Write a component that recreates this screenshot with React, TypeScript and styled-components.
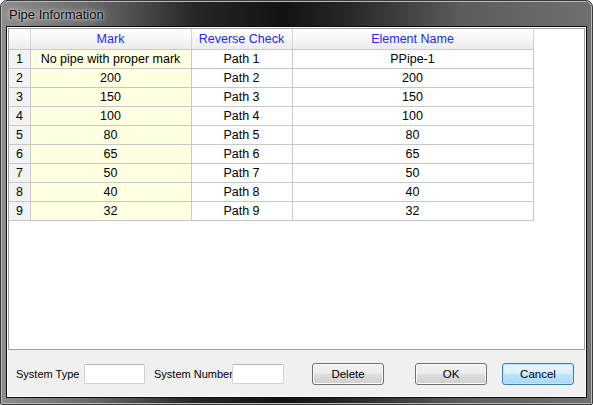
import React from "react";
import styled, { createGlobalStyle } from "styled-components";

const Global = createGlobalStyle`
  html, body { margin: 0; padding: 0; background: #ffffff; }
  body { font-family: "Liberation Sans", Arial, sans-serif; }
`;

const rows = [
	["No pipe with proper mark", "Path 1", "PPipe-1"],
	["200", "Path 2", "200"],
	["150", "Path 3", "150"],
	["100", "Path 4", "100"],
	["80", "Path 5", "80"],
	["65", "Path 6", "65"],
	["50", "Path 7", "50"],
	["40", "Path 8", "40"],
	["32", "Path 9", "32"],
];

const App = () => {
	return (
		<>
			<Global />
			<Window>
				<TitleBar>
					<Title>Pipe Information</Title>
				</TitleBar>
				<Client>
					<Panel>
						<Grid>
							<colgroup>
								<col style={{ width: 21 }} />
								<col style={{ width: 161 }} />
								<col style={{ width: 101 }} />
								<col style={{ width: 241 }} />
							</colgroup>
							<thead>
								<tr>
									<HeadCell />
									<HeadCell>Mark</HeadCell>
									<HeadCell>Reverse Check</HeadCell>
									<HeadCell>Element Name</HeadCell>
								</tr>
							</thead>
							<tbody>
								{rows.map((r, i) => (
									<tr key={i}>
										<NumCell>{i + 1}</NumCell>
										<Cell $mark>{r[0]}</Cell>
										<Cell>{r[1]}</Cell>
										<Cell>{r[2]}</Cell>
									</tr>
								))}
							</tbody>
						</Grid>
					</Panel>
					<Footer>
						<Label $w={68}>System Type</Label>
						<Field $w={61} />
						<Label $w={78} $gap={9}>
							System Number
						</Label>
						<Field $w={52} />
						<Button $gap={28}>Delete</Button>
						<Button $gap={31}>OK</Button>
						<Button $gap={15} $focus>
							Cancel
						</Button>
					</Footer>
				</Client>
			</Window>
		</>
	);
};

const Window = styled.div`
	width: 593px;
	height: 405px;
	box-sizing: border-box;
	display: flex;
	flex-direction: column;
	background: linear-gradient(
		90deg,
		#8e8e8e 0%,
		#6a6a6a 15%,
		#262626 33%,
		#121212 48%,
		#2a2a2a 60%,
		#5c5c5c 78%,
		#707070 100%
	);
	border: 1px solid #3a3a3a;
	border-radius: 7px 7px 2px 2px;
	box-shadow: inset 0 0 0 1px #b8b8b8;
	overflow: hidden;
`;

const TitleBar = styled.div`
	height: 26px;
	display: flex;
	align-items: center;
	padding-left: 8px;
	flex-shrink: 0;
`;

const Title = styled.span`
	font-family: "Liberation Sans", Arial, sans-serif;
	font-size: 13px;
	color: #101010;
	text-shadow: 0 0 6px #d8d8d8, 0 0 3px #e0e0e0;
	margin-top: 1px;
`;

const Client = styled.div`
	flex: 1;
	margin: 0 6px 7px 6px;
	background: #f0f0f0;
	border: 1px solid #ffffff;
	outline: 1px solid #0a0a0a;
	display: flex;
	flex-direction: column;
`;

const Panel = styled.div`
	background: #ffffff;
	border: 1px solid #a0a0a0;
	box-sizing: border-box;
	height: 322px;
	flex-shrink: 0;
`;

const Grid = styled.table`
	border-collapse: collapse;
	table-layout: fixed;
	width: 524px;
	font-family: "Liberation Sans", Arial, sans-serif;
	font-size: 12.5px;
	color: #000000;
`;

const HeadCell = styled.th`
	height: 20px;
	padding: 0;
	font-weight: normal;
	color: #2626f0;
	text-align: center;
	background: linear-gradient(180deg, #ffffff 0%, #f6f6f6 55%, #ebebeb 100%);
	border-right: 1px solid #d4d4d4;
	border-bottom: 1px solid #c8c8c8;
`;

const Cell = styled.td<{ $mark?: boolean }>`
	height: 18px;
	padding: 0;
	text-align: center;
	white-space: nowrap;
	background: ${(p) => (p.$mark ? "#ffffe1" : "#ffffff")};
	border-right: 1px solid #c8c8c8;
	border-bottom: 1px solid #c8c8c8;
`;

const NumCell = styled(Cell)`
	text-align: left;
	padding-left: 7px;
	background: #f3f3f3;
`;

const Footer = styled.div`
	flex: 1;
	display: flex;
	align-items: center;
	padding-left: 8px;
	padding-top: 1px;
`;

const Label = styled.span<{ $w: number; $gap?: number }>`
	flex-shrink: 0;
	width: ${(p) => p.$w}px;
	white-space: nowrap;
	font-family: "Liberation Sans", Arial, sans-serif;
	font-size: 11px;
	color: #000000;
	margin-left: ${(p) => p.$gap ?? 0}px;
`;

const Field = styled.div<{ $w: number }>`
	flex-shrink: 0;
	width: ${(p) => p.$w}px;
	height: 20px;
	box-sizing: border-box;
	background: #ffffff;
	border: 1px solid #d0d0d0;
	border-top-color: #b8b8b8;
	border-radius: 2px;
`;

const Button = styled.button<{ $gap: number; $focus?: boolean }>`
	flex-shrink: 0;
	width: 72px;
	height: 22px;
	box-sizing: border-box;
	margin-left: ${(p) => p.$gap}px;
	padding: 0;
	font-family: "Liberation Sans", Arial, sans-serif;
	font-size: 11.5px;
	color: #000000;
	border-radius: 3px;
	border: 1px solid ${(p) => (p.$focus ? "#3c7fb1" : "#707070")};
	background: ${(p) =>
		p.$focus
			? "linear-gradient(180deg, #eaf6fd 0%, #d9f0fc 48%, #bee6fd 52%, #a7d9f5 100%)"
			: "linear-gradient(180deg, #f2f2f2 0%, #ebebeb 48%, #dddddd 52%, #cfcfcf 100%)"};
	box-shadow: inset 0 0 0 1px ${(p) => (p.$focus ? "#bfe7fd" : "#fcfcfc")};
`;

export default App;
